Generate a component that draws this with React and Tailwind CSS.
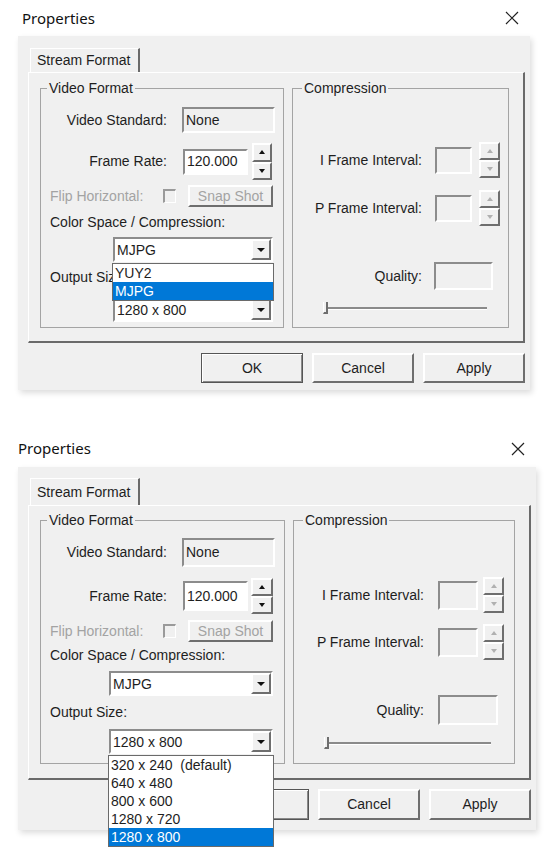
import React from "react";

// spacing for the two captures (the lower one is drawn a few px taller)
const SMALL = {
  width: "w-[512px]",
  title: "h-[36px] pl-[4px]",
  panel: "pt-[12px] pb-[7px]",
  tab: "h-[24px]",
  page: "pt-[7px] pb-[13px]",
  videoW: "w-[244px]",
  group: "h-[248px]",
  vsRow: "mt-[11px] h-[26px]",
  vsBox: "h-[26px]",
  frRow: "mt-[10px] h-[37px]",
  frBox: "ml-[16px] h-[26px]",
  frSpin: "ml-[4px] w-[20px] h-[37px]",
  flipRow: "mt-[5px] h-[22px]",
  csLabel: "mt-[7px]",
  combo1: "mt-[7px]",
  osLabel: "mt-[7px]",
  combo2: "mt-[12px]",
  comboX: "ml-[72px] w-[160px]",
  list: "w-[162px]",
  iRow: "mt-[46px] h-[36px]",
  pRow: "mt-[12px] h-[36px]",
  label: "w-[129px]",
  ivBox: "ml-[13px] w-[37px] h-[27px]",
  ivSpin: "ml-[7px] w-[21px] h-[36px]",
  qRow: "mt-[36px] h-[28px]",
  qBox: "ml-[12px] w-[59px] h-[28px]",
  slider: "mt-[12px] w-[164px]",
  btnRow: "mt-[10px] h-[30px]",
};

const BIG = {
  width: "w-[518px]",
  title: "h-[37px] pl-0",
  panel: "pt-[11px] pb-[10px]",
  tab: "h-[27px]",
  page: "pt-[6px] pb-[14px]",
  videoW: "w-[245px]",
  group: "h-[252px]",
  vsRow: "mt-[10px] h-[29px]",
  vsBox: "h-[29px]",
  frRow: "mt-[11px] h-[36px]",
  frBox: "ml-[16px] h-[30px]",
  frSpin: "ml-[3px] w-[22px] h-[36px]",
  flipRow: "mt-[6px] h-[22px]",
  csLabel: "mt-[5px]",
  combo1: "mt-[8px]",
  osLabel: "mt-[8px]",
  combo2: "mt-[9px]",
  comboX: "ml-[68px] w-[164px]",
  list: "w-[166px]",
  iRow: "mt-[49px] h-[36px]",
  pRow: "mt-[11px] h-[36px]",
  label: "w-[130px]",
  ivBox: "ml-[14px] w-[40px] h-[29px]",
  ivSpin: "ml-[5px] w-[21px] h-[36px]",
  qRow: "mt-[35px] h-[30px]",
  qBox: "ml-[14px] w-[60px] h-[30px]",
  slider: "mt-[12px] w-[167px]",
  btnRow: "mt-[9px] h-[31px]",
};

function Sunken({ className = "", children }) {
  return (
    <div
      className={`border-2 border-t-[#8c8c8c] border-l-[#8c8c8c] border-b-white border-r-white ${className}`}
    >
      {children}
    </div>
  );
}

function Raised({ className = "", children }) {
  return (
    <div
      className={`border-2 border-t-white border-l-white border-b-[#6e6e6e] border-r-[#6e6e6e] bg-[#f0f0f0] ${className}`}
    >
      {children}
    </div>
  );
}

function Spin({ disabled, className }) {
  const up = disabled ? "border-b-[#b0b0b0]" : "border-b-[#111]";
  const down = disabled ? "border-t-[#b0b0b0]" : "border-t-[#111]";
  return (
    <div className={`flex flex-col ${className}`}>
      <Raised className="flex-1 flex items-center justify-center">
        <span className={`w-0 h-0 border-x-[3px] border-x-transparent border-b-[4px] ${up}`} />
      </Raised>
      <Raised className="flex-1 flex items-center justify-center">
        <span className={`w-0 h-0 border-x-[3px] border-x-transparent border-t-[4px] ${down}`} />
      </Raised>
    </div>
  );
}

function Combo({ value, items, selected, s, className = "" }) {
  return (
    <div className={`relative h-[25px] ${s.comboX} ${className}`}>
      <Sunken className="h-full bg-white flex items-stretch">
        <span className="flex-1 pl-[2px] flex items-center leading-none">{value}</span>
        <Raised className="w-[20px] flex items-center justify-center">
          <span className="w-0 h-0 border-x-[4px] border-x-transparent border-t-[4px] border-t-[#111]" />
        </Raised>
      </Sunken>
      {items && (
        <div
          className={`absolute left-[-1px] top-full mt-[1px] z-10 bg-white border border-[#6a6a6a] ${s.list}`}
        >
          {items.map((it) => (
            <div
              key={it}
              className={`h-[18px] pl-[2px] leading-[18px] whitespace-pre ${
                it === selected ? "bg-[#0078d7] text-white" : ""
              }`}
            >
              {it}
            </div>
          ))}
        </div>
      )}
    </div>
  );
}

function VideoFormat({ s, openList }) {
  return (
    <fieldset className={`border border-[#a4a4a4] shrink-0 ${s.videoW} ${s.group}`}>
      <legend className="ml-[6px] px-[2px] leading-[16px]">Video Format</legend>
      <div className="flex flex-col">
        <div className={`flex items-center ${s.vsRow}`}>
          <span className="w-[126px] text-right">Video Standard:</span>
          <Sunken className={`ml-[15px] w-[93px] pl-[2px] flex items-center ${s.vsBox}`}>None</Sunken>
        </div>
        <div className={`flex items-center ${s.frRow}`}>
          <span className="w-[126px] text-right">Frame Rate:</span>
          <Sunken className={`w-[65px] bg-white pl-[2px] flex items-center ${s.frBox}`}>120.000</Sunken>
          <Spin className={s.frSpin} />
        </div>
        <div className={`flex items-center ${s.flipRow}`}>
          <span className="w-[122px] pl-[9px] text-[#a3a3a3]">Flip Horizontal:</span>
          <span className="w-[13px] h-[14px] border-t-2 border-l-2 border-[#9a9a9a] border-b border-r border-b-white border-r-white" />
          <Raised className="ml-[12px] w-[85px] h-[22px] flex items-center justify-center text-[#a3a3a3]">
            Snap Shot
          </Raised>
        </div>
        <span className={`pl-[9px] leading-[16px] ${s.csLabel}`}>Color Space / Compression:</span>
        <Combo
          s={s}
          className={s.combo1}
          value="MJPG"
          items={openList === "color" ? ["YUY2", "MJPG"] : null}
          selected="MJPG"
        />
        <span className={`pl-[9px] leading-[16px] ${s.osLabel}`}>Output Size:</span>
        <Combo
          s={s}
          className={s.combo2}
          value="1280 x 800"
          items={
            openList === "size"
              ? ["320 x 240  (default)", "640 x 480", "800 x 600", "1280 x 720", "1280 x 800"]
              : null
          }
          selected="1280 x 800"
        />
      </div>
    </fieldset>
  );
}

function Compression({ s }) {
  return (
    <fieldset className={`border border-[#a4a4a4] flex-1 min-w-0 ${s.group}`}>
      <legend className="ml-[9px] px-[2px] leading-[16px]">Compression</legend>
      <div className="flex flex-col">
        <div className={`flex items-center ${s.iRow}`}>
          <span className={`text-right ${s.label}`}>I Frame Interval:</span>
          <Sunken className={s.ivBox} />
          <Spin disabled className={s.ivSpin} />
        </div>
        <div className={`flex items-center ${s.pRow}`}>
          <span className={`text-right ${s.label}`}>P Frame Interval:</span>
          <Sunken className={s.ivBox} />
          <Spin disabled className={s.ivSpin} />
        </div>
        <div className={`flex items-center ${s.qRow}`}>
          <span className={`text-right ${s.label}`}>Quality:</span>
          <Sunken className={s.qBox} />
        </div>
        <div className={`relative ml-[30px] h-[12px] flex items-center ${s.slider}`}>
          <div className="w-full h-[3px] border-t-2 border-t-[#8a8a8a] border-b border-b-white" />
          {/* slider thumb */}
          <div className="absolute left-0 top-0 w-[5px] h-[12px] border-l border-l-white border-r-2 border-r-[#6e6e6e] border-b-2 border-b-[#6e6e6e] bg-[#f0f0f0]" />
        </div>
      </div>
    </fieldset>
  );
}

function Dialog({ big, openList }) {
  const s = big ? BIG : SMALL;
  return (
    <div className={`ml-[18px] ${s.width}`}>
      <div className={`flex items-center justify-between pr-[11px] ${s.title}`}>
        <span className="font-['Noto_Sans',sans-serif] text-[15px] text-[#111]">Properties</span>
        <svg width="14" height="14" viewBox="0 0 14 14">
          <path d="M1 1L13 13M13 1L1 13" stroke="#222" strokeWidth="1.2" />
        </svg>
      </div>
      <div className={`bg-[#f0f0f0] pl-[10px] pr-[5px] shadow-[2px_3px_6px_rgba(0,0,0,0.14)] ${s.panel}`}>
        {/* tab strip */}
        <div className="flex pl-[2px]">
          <div
            className={`w-[110px] pl-[6px] flex items-center border-t border-l border-white border-r-2 border-r-[#6a6a6a] ${s.tab}`}
          >
            Stream Format
          </div>
        </div>
        {/* tab page */}
        <div
          className={`flex gap-[8px] pl-[11px] pr-[14px] border-t border-l border-white border-r-2 border-b-2 border-r-[#6a6a6a] border-b-[#6a6a6a] ${s.page}`}
        >
          <VideoFormat s={s} openList={openList} />
          <Compression s={s} />
        </div>
        {/* buttons */}
        <div className={`flex justify-end gap-[9px] ${s.btnRow}`}>
          <div className="w-[102px] h-full flex items-center justify-center border border-[#555] shadow-[inset_1px_1px_0_#fff,inset_-1px_-1px_0_#8a8a8a]">
            OK
          </div>
          <Raised className="w-[102px] h-full flex items-center justify-center">Cancel</Raised>
          <Raised className="w-[102px] h-full flex items-center justify-center">Apply</Raised>
        </div>
      </div>
    </div>
  );
}

export default function App() {
  return (
    <div className="w-[544px] min-h-[857px] bg-white font-['Liberation_Sans',Arial,sans-serif] text-[14px] text-[#1e1e1e] overflow-hidden">
      <Dialog openList="color" />
      <div className="h-[40px]" />
      <Dialog big openList="size" />
    </div>
  );
}
